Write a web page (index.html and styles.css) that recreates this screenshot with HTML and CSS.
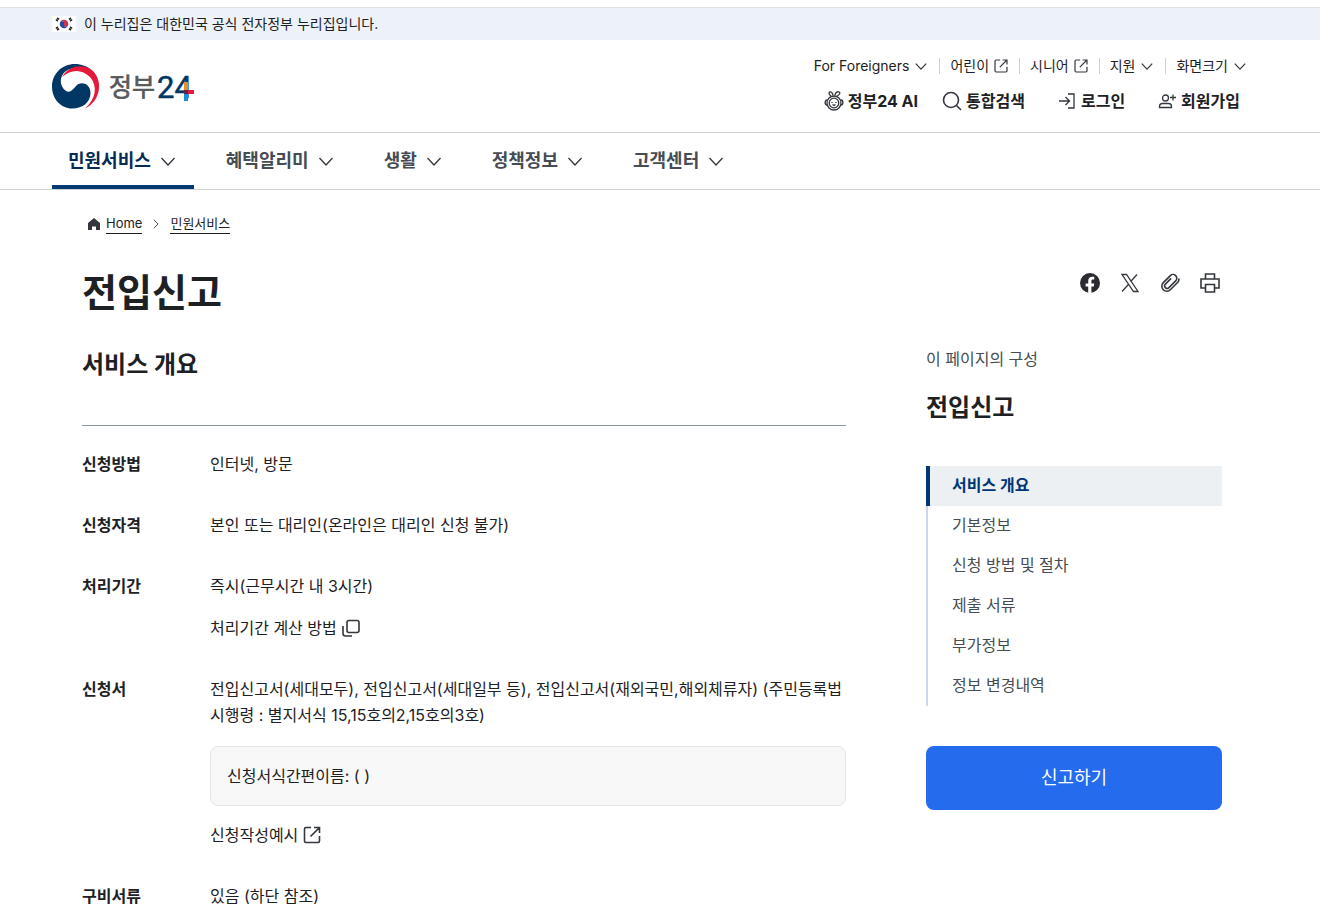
FILE: index.html
```html
<!DOCTYPE html>
<html lang="ko">
<head>
  <meta charset="UTF-8" />
  <meta name="viewport" content="width=device-width, initial-scale=1.0"/>
  <title>전입신고 | 정부24</title>
  <link rel="stylesheet" href="styles.css">
</head>
<body>
  <!-- shared icons -->
  <svg class="sprite" aria-hidden="true">
    <symbol id="i-down" viewBox="0 0 20 20"><path d="M3.500 7l6.500 7 6.500-7"/></symbol>
    <symbol id="i-right" viewBox="0 0 20 20"><path d="M7 4l6 6-6 6"/></symbol>
    <symbol id="i-out" viewBox="0 0 20 20"><path d="M9 2.500H4A1.500 1.500 0 0 0 2.500 4v12A1.500 1.500 0 0 0 4 17.500h12a1.500 1.500 0 0 0 1.500-1.500v-5M12 2.500h5.500V8M17.500 2.500L8.500 11.500"/></symbol>
  </svg>

  <div class="gov-bar">
    <div class="inner">
      <svg class="flag" viewBox="0 0 24 16" aria-hidden="true">
        <rect width="24" height="16" fill="#fff"/>
        <path d="M8 6.500a4 4 0 0 1 8 3 2 2 0 0 1-4-1.500 2 2 0 0 0-4-1.500z" fill="#d0304a"/>
        <path d="M8 6.500a4 4 0 0 0 8 3 2 2 0 0 1-4-1.500 2 2 0 0 0-4-1.500z" fill="#1f4e9e"/>
        <path d="M4.500 5l2-3M17.500 2l2 3M4.500 11l2 3M17.500 14l2-3" stroke="#222" stroke-width="2.500" stroke-dasharray="1.600 .4"/>
      </svg>
      <span>이 누리집은 대한민국 공식 전자정부 누리집입니다.</span>
    </div>
  </div>

  <header>
    <div class="inner head">
      <a href="#" class="logo" aria-label="정부24">
        <svg width="144" height="44" viewBox="0 0 144 44">
          <path fill="#003764" d="M41 7C35 2 29 0 23 0C10 0 0 10 0 22.500C0 35 9 44.500 20 44.500C31 44.500 38.500 38 38.500 29C38.500 19 28 17 24 22C20 27 17 29 14 27C7 22 7 12 14 7C22 2 34 2 41 7Z"/>
          <path fill="#e4193c" d="M10 13C18 0 33 0 41 7C51 17 49 37 33 44.500C44 35 46 22 38 13C30 5 19 5 10 13Z"/>
          <text x="57" y="32" class="logo-ko">정부</text>
          <text x="105" y="34" class="logo-num">24</text>
          <path fill="#e8902e" d="M132 18h4v8h-4z"/>
          <path fill="#6b2148" d="M132 26h4v4h-4z"/>
          <path fill="#e4193c" d="M136 26h6v4h-6z"/>
          <path fill="#1b8fd0" d="M132 30h4v7h-4z"/>
        </svg>
      </a>

      <div class="head-menus">
        <ul class="util">
          <li><button type="button">For Foreigners <svg class="icon"><use href="#i-down"/></svg></button></li>
          <li><a href="#">어린이 <svg class="icon"><use href="#i-out"/></svg></a></li>
          <li><a href="#">시니어 <svg class="icon"><use href="#i-out"/></svg></a></li>
          <li><button type="button">지원 <svg class="icon"><use href="#i-down"/></svg></button></li>
          <li><button type="button">화면크기 <svg class="icon"><use href="#i-down"/></svg></button></li>
        </ul>
        <ul class="actions">
          <li><a href="#"><svg class="icon" viewBox="0 0 20 20"><path d="M7 5C4 3 5 0 7 1s2 2 2 3.500M11 4.500C11 2 13 0 15 1s0 3-2 4"/><circle cx="10" cy="12" r="7"/><circle cx="10" cy="12" r="4.800"/><path d="M3 9c-2.500 0-2.500 5 0 5M17 9c2.500 0 2.500 5 0 5M8 11v1M12 11v1M8.500 13.500l1.500 1 1.500-1"/></svg>정부24 AI</a></li>
          <li><button type="button"><svg class="icon thick" viewBox="0 0 20 20"><circle cx="9" cy="9" r="7.500"/><path d="M14.500 14.500L19 19"/></svg>통합검색</button></li>
          <li><a href="#"><svg class="icon" viewBox="0 0 20 20"><path d="M11 3h6v14h-6M2 10h10.500M8.500 6l4 4-4 4"/></svg>로그인</a></li>
          <li><a href="#"><svg class="icon" viewBox="0 0 20 20"><circle cx="8.500" cy="7" r="3"/><path d="M2.500 16.500v-1c0-2 1.500-3 3-3h6c2 0 3 1 3 3v1zM13 6.500h6M16 3.500v6"/></svg>회원가입</a></li>
        </ul>
      </div>
    </div>

    <nav aria-label="주 메뉴">
      <ul class="inner gnb">
        <li><button type="button" class="active">민원서비스 <svg class="icon"><use href="#i-down"/></svg></button></li>
        <li><button type="button">혜택알리미 <svg class="icon"><use href="#i-down"/></svg></button></li>
        <li><button type="button">생활 <svg class="icon"><use href="#i-down"/></svg></button></li>
        <li><button type="button">정책정보 <svg class="icon"><use href="#i-down"/></svg></button></li>
        <li><button type="button">고객센터 <svg class="icon"><use href="#i-down"/></svg></button></li>
      </ul>
    </nav>
  </header>

  <div class="inner page">
    <nav class="breadcrumb" aria-label="현재 위치">
      <svg class="home" viewBox="0 0 14 14" aria-hidden="true"><path d="M7 1L1 6v7h4V9.500h4V13h4V6z"/></svg>
      <a href="#">Home</a>
      <svg class="icon"><use href="#i-right"/></svg>
      <a href="#">민원서비스</a>
    </nav>

    <div class="title-row">
      <h1>전입신고</h1>
      <div class="share">
        <button type="button" aria-label="페이스북"><svg class="icon" viewBox="0 0 20 20"><circle cx="10" cy="10" r="10" fill="#2a2c31" stroke="none"/><path fill="#fff" stroke="none" d="M8.200 20v-6.500H5.600v-3h2.600V8c0-2.900 1.600-4.300 4.100-4.300.9 0 1.900.1 1.900.1v2.700h-1.300c-1.200 0-1.500.7-1.500 1.500v2.500h2.800l-.4 3h-2.400V20z"/></svg></button>
        <button type="button" aria-label="X"><svg class="icon" viewBox="0 0 20 20"><path d="M2 1.500h4.500l11.500 17h-4.500zM17 1.500l-6.500 7.300M8.800 11L2 18.500"/></svg></button>
        <button type="button" aria-label="링크 복사"><svg class="icon thick" viewBox="0 0 20 20"><path transform="rotate(45 10 10)" d="M7.500 6v8a2.500 2.500 0 0 0 5 0V4.500a3.750 3.750 0 0 0-7.500 0v10a5 5 0 0 0 10 0V4a4 4 0 0 0-2-3.300"/></svg></button>
        <button type="button" aria-label="인쇄"><svg class="icon thick" viewBox="0 0 20 20"><path d="M5.500 6V1h9v5M5.500 15H1V6h18v9h-4.500M5.500 11.500h9V19h-9z"/></svg></button>
      </div>
    </div>

    <div class="columns">
      <main>
        <h2>서비스 개요</h2>
        <dl>
          <div>
            <dt>신청방법</dt>
            <dd><p>인터넷, 방문</p></dd>
          </div>
          <div>
            <dt>신청자격</dt>
            <dd><p>본인 또는 대리인(온라인은 대리인 신청 불가)</p></dd>
          </div>
          <div>
            <dt>처리기간</dt>
            <dd>
              <p>즉시(근무시간 내 3시간)</p>
              <button type="button" class="more">처리기간 계산 방법 <svg class="icon thick" viewBox="0 0 20 20"><rect x="6" y="2.500" width="12" height="12" rx="2"/><path d="M2 8v7.500a2.500 2.500 0 0 0 2.500 2.500H11"/></svg></button>
            </dd>
          </div>
          <div>
            <dt>신청서</dt>
            <dd>
              <p>전입신고서(세대모두), 전입신고서(세대일부 등), 전입신고서(재외국민,해외체류자) (주민등록법 시행령 : 별지서식 15,15호의2,15호의3호)</p>
              <p class="box">신청서식간편이름: ( )</p>
              <a href="#" class="more">신청작성예시 <svg class="icon thick"><use href="#i-out"/></svg></a>
            </dd>
          </div>
          <div>
            <dt>구비서류</dt>
            <dd><p>있음 (하단 참조)</p></dd>
          </div>
        </dl>
      </main>

      <aside>
        <p class="aside-label">이 페이지의 구성</p>
        <h2>전입신고</h2>
        <ul class="toc">
          <li><a href="#" class="active">서비스 개요</a></li>
          <li><a href="#">기본정보</a></li>
          <li><a href="#">신청 방법 및 절차</a></li>
          <li><a href="#">제출 서류</a></li>
          <li><a href="#">부가정보</a></li>
          <li><a href="#">정보 변경내역</a></li>
        </ul>
        <button type="button" class="apply">신고하기</button>
      </aside>
    </div>
  </div>
</body>
</html>
```
FILE: styles.css
```css
* {
  box-sizing: border-box;
}

body {
  margin: 0;
  padding-top: 7px;
  font-family: Inter, "Noto Sans CJK KR", sans-serif;
  font-size: 16px;
  line-height: 26px;
  color: #1e2124;
  background: #fff;
}

h1, h2, p, ul, dl, dd {
  margin: 0;
  padding: 0;
}

ul {
  list-style: none;
}

a {
  color: inherit;
  text-decoration: none;
}

button {
  padding: 0;
  border: none;
  background: none;
  font: inherit;
  color: inherit;
  cursor: pointer;
}

.sprite {
  display: none;
}

.icon {
  flex: none;
  width: 20px;
  height: 20px;
  fill: none;
  stroke: #33363d;
  stroke-width: 1.3;
}

.icon.thick {
  stroke-width: 1.6;
}

.inner {
  padding: 0 68px 0 52px;
}

/* top bar */
.gov-bar {
  border-top: 1px solid #dde1e6;
  background: #edf1f8;
  font-size: 14px;
}

.gov-bar .inner {
  display: flex;
  align-items: center;
  gap: 8px;
  height: 32px;
}

.flag {
  width: 24px;
  height: 16px;
}

/* header */
.head {
  display: flex;
  justify-content: space-between;
  align-items: center;
  height: 92px;
}

.logo svg {
  display: block;
  overflow: visible;
}

.logo-ko {
  font-size: 25px;
  fill: #58595b;
  stroke: #58595b;
  stroke-width: 0.7;
}

.logo-num {
  font-family: Roboto, sans-serif;
  font-size: 31px;
  fill: #003764;
  stroke: #003764;
  stroke-width: 0.5;
}

.head-menus {
  display: flex;
  flex-direction: column;
  align-items: flex-end;
  gap: 14px;
}

.util, .actions {
  display: flex;
  align-items: center;
}

.util {
  font-size: 14px;
}

.util li {
  display: flex;
  height: 16px;
  align-items: center;
  padding: 0 10px;
}

.util li + li {
  border-left: 1px solid #cdd1d5;
}

.util li:last-child {
  padding-right: 4px;
}

.util a, .util button {
  display: flex;
  align-items: center;
  gap: 4px;
}

.util .icon {
  width: 16px;
  height: 16px;
  stroke-width: 1.5;
}

.actions {
  gap: 8px;
  font-weight: 700;
}

.actions a, .actions button {
  display: flex;
  align-items: center;
  gap: 4px;
  padding: 0 12px;
}

.actions li:first-child a {
  padding-right: 4px;
}

/* main menu */
header nav {
  border: solid #cdd1d5;
  border-width: 1px 0;
}

.gnb {
  display: flex;
  gap: 16px;
}

.gnb button {
  display: flex;
  align-items: center;
  gap: 7px;
  height: 56px;
  padding: 4px 16px 0;
  border: solid transparent;
  border-width: 0 0 4px;
  font-size: 18px;
  font-weight: 700;
  color: #464c53;
}

.gnb .active {
  border-color: #063a74;
  color: #052b57;
}

/* page */
.page {
  padding: 20px 98px 0 82px;
}

.breadcrumb {
  display: flex;
  align-items: center;
  gap: 5px;
  padding-left: 5px;
  height: 28px;
  font-size: 13px;
}

.breadcrumb a {
  border-bottom: 1px solid #1e2124;
  line-height: 19px;
}

.breadcrumb .icon {
  width: 14px;
  height: 14px;
  margin: 0 2px;
}

.home {
  width: 14px;
  height: 14px;
  fill: #33363d;
}

.title-row {
  display: flex;
  justify-content: space-between;
  margin-top: 24px;
}

h1 {
  font-size: 38px;
  line-height: 60px;
}

.share {
  display: flex;
  gap: 20px;
  height: 42px;
  padding-right: 2px;
}

.share button {
  display: flex;
  align-items: center;
}

.columns {
  display: grid;
  grid-template-columns: 1fr 296px;
  gap: 80px;
  margin-top: 24px;
}

h2 {
  font-size: 24px;
  line-height: 38px;
}

main h2 {
  padding-bottom: 41px;
  border-bottom: 1px solid #8a949e;
}

dl {
  display: flex;
  flex-direction: column;
  gap: 35px;
  padding: 25px 0;
}

dl > div {
  display: grid;
  grid-template-columns: 128px 1fr;
}

dt {
  font-weight: 700;
}

dd {
  display: flex;
  flex-direction: column;
  align-items: flex-start;
  gap: 16px;
}

.more {
  display: flex;
  align-items: center;
  gap: 4px;
}

.box {
  width: 100%;
  margin-top: 2px;
  padding: 16px;
  border: 1px solid #e4e5e7;
  border-radius: 8px;
  background: #f8f8f8;
}

/* side column */
.aside-label {
  color: #464c53;
}

aside h2 {
  margin: 17px 0 39px;
}

.toc {
  border-left: 2px solid #cdd8ea;
}

.toc a {
  display: block;
  padding-left: 24px;
  height: 40px;
  line-height: 38px;
  color: #464c53;
}

.toc .active {
  margin-left: -2px;
  padding-left: 22px;
  border-left: 4px solid #003675;
  background: #ecf0f3;
  font-weight: 700;
  color: #003675;
}

.apply {
  width: 100%;
  height: 64px;
  margin-top: 40px;
  border-radius: 8px;
  background: #256bed;
  color: #fff;
  font-size: 18px;
}
```
